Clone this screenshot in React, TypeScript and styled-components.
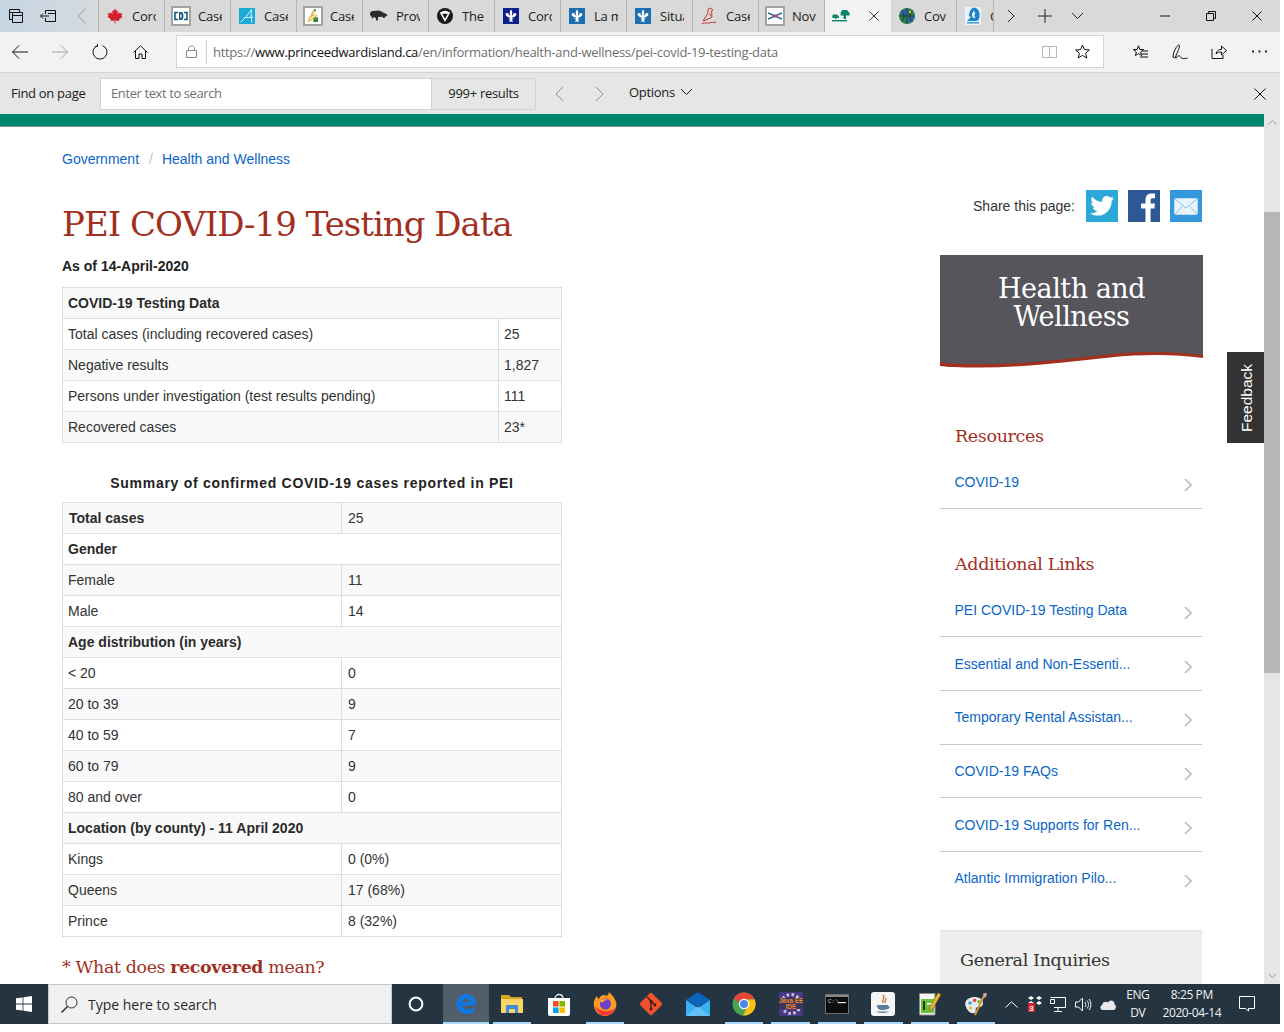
import React from "react";
import styled, { createGlobalStyle } from "styled-components";

const uiFont = `"Open Sans", "Noto Sans", sans-serif`;
const pageFont = `"Liberation Sans", Arial, sans-serif`;
const serifFont = `"DejaVu Serif", "Liberation Serif", serif`;

const GlobalStyle = createGlobalStyle`
    html, body {
        margin: 0;
        padding: 0;
        background: #fff;
    }
    * {
        box-sizing: border-box;
    }
`;

/* ---------- small drawn icons ---------- */

const Line = styled.svg.attrs({ fill: "none", stroke: "currentColor", strokeWidth: 1 })`
    display: block;
    flex: none;
`;

const ChevronLeft = ({ h = 20 }: { h?: number }) => (
    <Line width={h / 2 + 1} height={h} viewBox={`0 0 ${h / 2 + 1} ${h}`}>
        <path d={`M${h / 2} 1 L1 ${h / 2} L${h / 2} ${h - 1}`} />
    </Line>
);
const ChevronRight = ({ h = 20 }: { h?: number }) => (
    <Line width={h / 2 + 1} height={h} viewBox={`0 0 ${h / 2 + 1} ${h}`}>
        <path d={`M1 1 L${h / 2} ${h / 2} L1 ${h - 1}`} />
    </Line>
);
const ChevronDown = ({ w = 14 }: { w?: number }) => (
    <Line width={w} height={w / 2 + 1} viewBox={`0 0 ${w} ${w / 2 + 1}`}>
        <path d={`M1 1 L${w / 2} ${w / 2} L${w - 1} 1`} />
    </Line>
);
const ChevronUp = () => (
    <Line width="9" height="5" viewBox="0 0 9 5">
        <path d="M0.5 4.5 L4.5 0.5 L8.5 4.5" />
    </Line>
);
const Cross = ({ s = 12 }: { s?: number }) => (
    <Line width={s} height={s} viewBox={`0 0 ${s} ${s}`}>
        <path d={`M0.5 0.5 L${s - 0.5} ${s - 0.5} M${s - 0.5} 0.5 L0.5 ${s - 0.5}`} />
    </Line>
);

const Fleur = ({ bg }: { bg: string }) => (
    <svg width="16" height="16" viewBox="0 0 16 16">
        <rect width="16" height="16" fill={bg} />
        <path
            fill="#fff"
            d="M8 1.5 C9.6 3.4 9.6 5 8.7 7.2 H10 C9.8 5.8 11 4.6 12.4 5 C14 5.6 13.6 8 12 8.2 C11.6 9 10.6 9.4 9.4 9.2 L9.2 10.4 H10.4 V11.2 H9 L9.8 14 H8.6 L8 12.4 L7.4 14 H6.2 L7 11.2 H5.6 V10.4 H6.8 L6.6 9.2 C5.4 9.4 4.4 9 4 8.2 C2.4 8 2 5.6 3.6 5 C5 4.6 6.2 5.8 6 7.2 H7.3 C6.4 5 6.4 3.4 8 1.5 Z"
        />
    </svg>
);

const favicons: Record<string, React.ReactNode> = {
    canada: (
        <svg width="16" height="16" viewBox="0 0 16 16">
            <path
                fill="#d3202b"
                d="M8 0.5 L9.4 3 L11 2.2 L10.3 6 L12.2 4.2 L12.8 5.6 L15.4 5.2 L14.4 8 L15.6 8.7 L12 11.6 L12.4 13 L8.4 12.6 V15.6 H7.6 V12.6 L3.6 13 L4 11.6 L0.4 8.7 L1.6 8 L0.6 5.2 L3.2 5.6 L3.8 4.2 L5.7 6 L5 2.2 L6.6 3 Z"
            />
        </svg>
    ),
    cbc: (
        <svg width="20" height="20" viewBox="0 0 20 20">
            <rect x="1" y="1" width="18" height="18" fill="#fff" stroke="#a3a3a3" strokeWidth="2" />
            <path fill="none" stroke="#14597f" strokeWidth="1.6" d="M7 6.5 H4 V13.5 H7 M13 6.5 H16 V13.5 H13" />
            <path fill="#14597f" d="M8 6 H10 C11.8 6 12.4 8 12.4 10 C12.4 12 11.8 14 10 14 H8 Z" />
            <path fill="#fff" d="M9.4 8 H10 C10.8 8 10.8 12 10 12 H9.4 Z" />
        </svg>
    ),
    atlantic: (
        <svg width="16" height="16" viewBox="0 0 16 16">
            <rect width="16" height="16" fill="#19aad8" />
            <path fill="none" stroke="#e8f7fc" strokeWidth="1" d="M1.5 14 C5 12 9 6 12.5 1.5 C12 6 12 11 13 14.5 M5 10 C8 9 11 9.4 14 9.4" />
        </svg>
    ),
    sask: (
        <svg width="20" height="20" viewBox="0 0 20 20">
            <rect x="1" y="1" width="18" height="18" fill="#fff" stroke="#a3a3a3" strokeWidth="2" />
            <path fill="none" stroke="#e0b63c" strokeWidth="1.5" d="M5 16 L11 4 M7 15 L14 9 M6 12 L12 8" />
            <path fill="#2f8a3d" d="M11 12 L15 11 L15 16 L10 16 Z M11 3 L13 3 L12 7 Z" />
        </svg>
    ),
    bison: (
        <svg width="18" height="12" viewBox="0 0 18 12">
            <path
                fill="#2b2b2b"
                d="M0 3 C1 1 4 0.5 6 1 C8 0 11 1 13 2.5 C15 3 17 4 17.6 5.5 L15.5 6.4 L14.5 8 H13 L12.6 6.8 L8 7 L8 10.5 L6.4 10.5 L5.4 7.4 L3.6 7 L2.8 9 L1.4 6.6 C0.4 6 0 4.5 0 3 Z"
            />
        </svg>
    ),
    ontario: (
        <svg width="16" height="16" viewBox="0 0 16 16">
            <circle cx="8" cy="8" r="8" fill="#1a1a1a" />
            <path fill="none" stroke="#fff" strokeWidth="1.5" d="M4 5 H12 L8 12.4 Z M4 5 C5.5 4 6.8 3.6 8 3.4 C9.2 3.6 10.5 4 12 5" />
        </svg>
    ),
    "qc-navy": <Fleur bg="#0e1f8a" />,
    "qc-blue": <Fleur bg="#1d6fb0" />,
    nb: (
        <svg width="18" height="18" viewBox="0 0 18 18">
            <path
                fill="none"
                stroke="#c8342c"
                strokeWidth="1"
                d="M10 1 C7.5 1.5 8 4 8 6 L3 14 M10 1 L13 3 L11.5 4 L12 10 L7 12.5 L3.5 14 M9 7 L11.5 9 M2 16.5 C5 15 8 17 11 15.5 C13 15 15 16 16 15"
            />
        </svg>
    ),
    ns: (
        <svg width="20" height="20" viewBox="0 0 20 20">
            <rect x="1" y="1" width="18" height="18" fill="#fff" stroke="#a3a3a3" strokeWidth="2" />
            <path fill="none" stroke="#2c6ca8" strokeWidth="1.6" d="M3 7 L17 13 M17 7 L3 13" />
            <path fill="#d8434a" d="M8.5 8.5 H11.5 V11.5 H8.5 Z" />
        </svg>
    ),
    pei: (
        <svg width="18" height="14" viewBox="0 0 18 14">
            <path fill="#0a8468" d="M10 1 H15 L17.6 4 V6.5 H14 V10 H11.6 V6.5 H8.6 V4 Z" />
            <path fill="#0a8468" d="M1 5.5 H5 L7 7.5 V9 H4.4 V10 H3 V9 H0.4 V7 Z" />
            <rect y="11" width="15" height="1.4" fill="#0a8468" />
        </svg>
    ),
    globe: (
        <svg width="16" height="16" viewBox="0 0 16 16">
            <circle cx="8" cy="8" r="8" fill="#2a7d4f" />
            <path fill="#2f5fb8" d="M3 3 L7 1 L9 4 L6 8 L2 7 Z M10 9 L15 8 L13 14 L9 14 Z" />
            <path fill="none" stroke="#1c2b2b" strokeWidth="0.7" d="M8 0 V16 M0 8 H16 M2.4 2.4 C6 5 6 11 2.4 13.6 M13.6 2.4 C10 5 10 11 13.6 13.6" />
            <path fill="#d9c544" d="M10 3 L12 3 L12 5 L10 5 Z" />
        </svg>
    ),
    nl: (
        <svg width="16" height="18" viewBox="0 0 16 18">
            <rect width="16" height="18" fill="#e8f2fb" />
            <path fill="#1f82c8" d="M9 0.5 C13 1 15 5 14.6 9 C14.4 12 13 14 11 14 H2 C4 12 5 11 6 10 L4 9 C4 5 5.6 1.6 9 0.5 Z" />
            <path fill="#fff" d="M8.6 4 C10 4.6 10.6 7 9 9 L11 11 L7.6 10.4 L7 7 Z" />
            <rect x="2" y="15" width="12" height="1.6" fill="#4aa0da" />
        </svg>
    ),
};

/* ---------- tab strip ---------- */

const TabStrip = styled.div`
    display: flex;
    height: 32px;
    background: #d9d9d9;
    color: #222;
`;

const TabActions = styled.div`
    display: flex;
    align-items: center;
    width: 99px;
    flex: none;
    padding-left: 9px;
    gap: 17px;
    background: linear-gradient(90deg, #c6d5e3, #d5dade);
    border-right: 1px solid #b3b3b3;
    color: #111;
`;

const TabBack = styled.span`
    color: #a0a0a0;
    margin-left: 4px;
`;

const Tab = styled.div<{ $w: number; $active?: boolean }>`
    display: flex;
    align-items: center;
    flex: none;
    position: relative;
    width: ${(p) => p.$w}px;
    height: 32px;
    background: ${(p) => (p.$active ? "#f2f2f2" : "#d9d9d9")};
    border-right: 1px solid ${(p) => (p.$active ? "#f2f2f2" : "#b3b3b3")};
`;

const TabIcon = styled.span`
    flex: none;
    width: 33px;
    height: 32px;
    display: flex;
    align-items: center;
    justify-content: center;
    padding-right: 2px;
`;

const TabLabel = styled.span<{ $w: number }>`
    display: block;
    width: ${(p) => p.$w}px;
    overflow: hidden;
    white-space: nowrap;
    font: 13px ${uiFont};
    letter-spacing: -0.2px;
    line-height: 32px;
    color: #222;
`;

const TabClose = styled.span`
    margin-left: auto;
    margin-right: 11px;
    color: #333;
`;

const StripTool = styled.span<{ $w: number }>`
    flex: none;
    width: ${(p) => p.$w}px;
    display: flex;
    align-items: center;
    justify-content: center;
    color: #222;
`;

const StripSpacer = styled.div`
    flex: 1;
`;

const WindowButton = styled.span`
    flex: none;
    width: 46px;
    display: flex;
    align-items: center;
    justify-content: center;
    color: #111;
`;

/* ---------- nav bar ---------- */

const NavBar = styled.div`
    display: flex;
    align-items: center;
    height: 41px;
    padding: 0 0 1px 0;
    background: #f2f2f2;
    border-bottom: 1px solid #d4d4d4;
`;

const NavButton = styled.span<{ $w?: number; $off?: boolean }>`
    flex: none;
    width: ${(p) => p.$w ?? 40}px;
    display: flex;
    align-items: center;
    justify-content: center;
    color: ${(p) => (p.$off ? "#a8a8a8" : "#111")};
`;

const AddressBox = styled.div`
    flex: none;
    display: flex;
    align-items: center;
    width: 928px;
    height: 33px;
    margin-left: 16px;
    margin-right: 17px;
    padding-right: 4px;
    background: #fff;
    border: 1px solid #d4d4d4;
    color: #777;
`;

const LockSlot = styled.span`
    flex: none;
    width: 30px;
    height: 24px;
    display: flex;
    align-items: center;
    justify-content: center;
    border-right: 1px solid #d0d0d0;
    color: #8a8a8a;
`;

const Url = styled.span`
    flex: 1;
    padding-left: 6px;
    font: 13px ${uiFont};
    color: #6f6f6f;
    white-space: nowrap;
    letter-spacing: -0.29px;
    b {
        font-weight: 400;
        color: #111;
    }
`;

const AddressTool = styled.span<{ $muted?: boolean }>`
    flex: none;
    width: 33px;
    display: flex;
    justify-content: center;
    color: ${(p) => (p.$muted ? "#b5b5b5" : "#111")};
`;

/* ---------- find bar ---------- */

const FindBar = styled.div`
    display: flex;
    align-items: center;
    height: 41px;
    background: #e6e6e6;
    font: 13px ${uiFont};
    letter-spacing: -0.3px;
    color: #1c1c1c;
`;

const FindLabel = styled.span`
    flex: none;
    width: 100px;
    padding-left: 11px;
    margin-bottom: 2px;
`;

const FindInput = styled.div`
    flex: none;
    width: 332px;
    height: 32px;
    padding-left: 10px;
    line-height: 29px;
    letter-spacing: -0.4px;
    background: #fff;
    border: 1px solid #d2d2d2;
    color: #707070;
`;

const FindCount = styled.div`
    flex: none;
    width: 104px;
    height: 32px;
    line-height: 28px;
    text-align: center;
    border: 1px solid #d2d2d2;
    border-left: none;
    background: #e6e6e6;
    margin-right: 3px;
`;

const FindArrow = styled.span`
    flex: none;
    width: 40px;
    display: flex;
    justify-content: center;
    color: #8f8f8f;
`;

const FindOptions = styled.span`
    display: flex;
    align-items: center;
    gap: 5px;
    margin-left: 10px;
    margin-bottom: 3px;
`;

const FindClose = styled.span`
    margin-left: auto;
    margin-right: 14px;
    color: #111;
`;

/* ---------- page ---------- */

const Viewport = styled.div`
    display: flex;
    height: 870px;
    overflow: hidden;
`;

const PageBody = styled.div`
    position: relative;
    flex: none;
    width: 1264px;
    overflow: hidden;
    background: #fff;
    font: 14px/20px ${pageFont};
    color: #333;
`;

const Band = styled.div`
    height: 13px;
    background: #00856f;
    border-bottom: 1px solid #7d8f8a;
`;

const Columns = styled.div`
    display: flex;
    padding-left: 62px;
`;

const MainColumn = styled.main`
    flex: none;
    width: 500px;
    padding-top: 22px;
`;

const Breadcrumb = styled.nav`
    display: flex;
    height: 20px;
    a {
        color: #0b66c3;
        text-decoration: none;
    }
    span {
        color: #c4c4c4;
        padding: 0 9px 0 10px;
    }
`;

const Title = styled.h1`
    margin: 32px 0 0;
    font: 400 34px/46px ${serifFont};
    letter-spacing: -1px;
    color: #a1301f;
    white-space: nowrap;
`;

const AsOf = styled.p`
    margin: 9px 0 11px;
    font-weight: 700;
    color: #222;
`;

const DataTable = styled.table<{ $valueInset?: number }>`
    width: 500px;
    table-layout: fixed;
    border-collapse: collapse;
    caption {
        caption-side: top;
        height: 29px;
        padding-top: 0;
        font-weight: 700;
        letter-spacing: 0.71px;
        color: #222;
    }
    td + td {
        padding-left: ${(p) => p.$valueInset ?? 5}px;
    }
`;

const Row = styled.tr`
    height: 31px;
    &:nth-child(odd) {
        background: #f9f9f9;
    }
`;

const Cell = styled.td<{ $bold?: boolean; $inset?: boolean }>`
    padding: 0 5px 0 ${(p) => (p.$inset ? 6 : 5)}px;
    border: 1px solid #ddd;
    font-weight: ${(p) => (p.$bold ? 700 : 400)};
    color: ${(p) => (p.$bold ? "#2b2b2b" : "#333")};
    white-space: nowrap;
`;

const Spacer = styled.div`
    height: 30px;
`;

const FootNote = styled.p`
    margin: 18px 0 0;
    font: 400 17.4px/24px ${serifFont};
    letter-spacing: -0.35px;
    color: #a1301f;
    white-space: nowrap;
    b {
        font-weight: 700;
    }
`;

const SideColumn = styled.aside`
    flex: none;
    width: 263px;
    margin-left: 378px;
    padding-top: 63px;
`;

const ShareRow = styled.div`
    display: flex;
    align-items: center;
    justify-content: flex-end;
    height: 32px;
    padding-right: 1px;
`;

const ShareLabel = styled.span`
    margin-right: 1px;
    color: #333;
`;

const ShareIcon = styled.span<{ $bg: string }>`
    display: flex;
    align-items: center;
    justify-content: center;
    width: 32px;
    height: 32px;
    margin-left: 10px;
    background: ${(p) => p.$bg};
    overflow: hidden;
`;

const Banner = styled.div`
    margin-top: 33px;
    height: 96px;
    padding-top: 20px;
    background: #56555b;
    color: #fff;
    text-align: center;
    font: 400 27px/28px ${serifFont};
    letter-spacing: -0.5px;
`;

const BannerWave = styled.svg`
    display: block;
    width: 263px;
    height: 17px;
`;

const SideHeading = styled.h2<{ $top: number; $after: number }>`
    margin: ${(p) => p.$top}px 0 ${(p) => p.$after}px 15px;
    height: 24px;
    font: 400 17.5px/24px ${serifFont};
    letter-spacing: -0.35px;
    color: #a1301f;
`;

const LinkRow = styled.a<{ $last?: boolean; $nudge?: boolean }>`
    display: flex;
    align-items: center;
    justify-content: space-between;
    width: 262px;
    height: 53.7px;
    padding: ${(p) => (p.$nudge ? 2 : 0)}px 10px 0 14.5px;
    color: #0b66c3;
    text-decoration: none;
    white-space: nowrap;
    border-bottom: 1px solid ${(p) => (p.$last ? "transparent" : "#c6c6c6")};
`;

const LinkChevron = styled.svg.attrs({ width: 8, height: 14, viewBox: "0 0 8 14" })`
    display: block;
    margin-top: 6px;
    fill: none;
    stroke: #bcbcbc;
    stroke-width: 1.6;
`;

const InquiryBox = styled.div`
    width: 262px;
    height: 100px;
    margin-top: 24px;
    padding: 14px 19px;
    background: #efefef;
    border: 1px solid #ececec;
    border-top: 2px solid #e8e8e8;
    font: 400 17.5px/28px ${serifFont};
    letter-spacing: -0.35px;
    color: #333;
`;

const Feedback = styled.div`
    position: absolute;
    top: 238px;
    right: 0;
    width: 37px;
    height: 91px;
    padding-right: 3px;
    display: flex;
    align-items: center;
    justify-content: center;
    background: #333;
    color: #fff;
    font: 15.5px ${pageFont};
    writing-mode: vertical-rl;
    transform: rotate(180deg);
`;

const ScrollBar = styled.div`
    flex: none;
    width: 16px;
    display: flex;
    flex-direction: column;
    background: #e6e6e6;
`;

const ScrollArrow = styled.span<{ $end?: boolean }>`
    flex: none;
    height: 16px;
    display: flex;
    align-items: center;
    justify-content: center;
    color: #9a9a9a;
    margin-top: ${(p) => (p.$end ? "auto" : "0")};
`;

const ScrollThumb = styled.div`
    flex: none;
    height: 461px;
    margin-top: 82px;
    background: #b6b6b6;
`;

/* ---------- task bar ---------- */

const TaskBar = styled.div`
    display: flex;
    align-items: stretch;
    height: 40px;
    background: #243441;
    color: #fff;
`;

const StartButton = styled.div`
    flex: none;
    width: 48px;
    display: flex;
    align-items: center;
    justify-content: center;
`;

const SearchBox = styled.div`
    flex: none;
    display: flex;
    align-items: center;
    gap: 10px;
    width: 344px;
    padding-left: 12px;
    background: #f1f1f1;
    border: 1px solid #c9c9c9;
    color: #2a2a2a;
    font: 14px ${uiFont};
`;

const CortanaSlot = styled.div`
    flex: none;
    width: 51px;
    padding-right: 4px;
    display: flex;
    align-items: center;
    justify-content: center;
`;

const AppSlot = styled.div<{ $open?: boolean; $active?: boolean }>`
    flex: none;
    position: relative;
    width: ${(p) => (p.$active ? 46 : 46.4)}px;
    display: flex;
    align-items: center;
    justify-content: center;
    background: ${(p) => (p.$active ? "#4f5e68" : "transparent")};
    &::after {
        content: "";
        display: ${(p) => (p.$open ? "block" : "none")};
        position: absolute;
        bottom: 0;
        left: ${(p) => (p.$active ? "0" : "4px")};
        right: ${(p) => (p.$active ? "0" : "4px")};
        height: 2px;
        background: #a6d8fb;
    }
`;

const Tray = styled.div`
    flex: 1;
    display: flex;
    align-items: center;
`;

const TrayIcon = styled.span<{ $w: number }>`
    flex: none;
    width: ${(p) => p.$w}px;
    display: flex;
    justify-content: center;
    color: #fff;
`;

const TrayText = styled.div<{ $w: number }>`
    flex: none;
    width: ${(p) => p.$w}px;
    text-align: center;
    font: 12px/18px ${uiFont};
    letter-spacing: -0.4px;
    color: #f2f2f2;
`;

const Frame = styled.div`
    width: 1280px;
    height: 1024px;
    overflow: hidden;
`;

/* ---------- data ---------- */

const tabs: { icon: string; label: string }[] = [
    { icon: "canada", label: "Coronavirus" },
    { icon: "cbc", label: "Cases" },
    { icon: "atlantic", label: "Cases" },
    { icon: "sask", label: "Cases" },
    { icon: "bison", label: "Province" },
    { icon: "ontario", label: "The" },
    { icon: "qc-navy", label: "Corona" },
    { icon: "qc-blue", label: "La maladie" },
    { icon: "qc-blue", label: "Situation" },
    { icon: "nb", label: "Cases" },
    { icon: "ns", label: "Novel" },
];

const additionalLinks = [
    "PEI COVID-19 Testing Data",
    "Essential and Non-Essenti...",
    "Temporary Rental Assistan...",
    "COVID-19 FAQs",
    "COVID-19 Supports for Ren...",
    "Atlantic Immigration Pilo...",
];

const summaryRows: { a: string; b?: string; bold?: boolean }[] = [
    { a: "Total cases", b: "25", bold: true },
    { a: "Gender" },
    { a: "Female", b: "11" },
    { a: "Male", b: "14" },
    { a: "Age distribution (in years)" },
    { a: "< 20", b: "0" },
    { a: "20 to 39", b: "9" },
    { a: "40 to 59", b: "7" },
    { a: "60 to 79", b: "9" },
    { a: "80 and over", b: "0" },
    { a: "Location (by county) - 11 April 2020" },
    { a: "Kings", b: "0 (0%)" },
    { a: "Queens", b: "17 (68%)" },
    { a: "Prince", b: "8 (32%)" },
];

const taskApps: { key: string; open?: boolean; node: React.ReactNode }[] = [
    {
        key: "explorer",
        open: true,
        node: (
            <svg width="22" height="20" viewBox="0 0 22 20">
                <path fill="#d9a21f" d="M0 1 H8 L10 3 H21 V18 H0 Z" />
                <rect y="5" width="22" height="14" fill="#fbd666" />
                <path fill="#3c8ed6" d="M5 19 V11 H17 V19 H14 V15 H8 V19 Z" />
            </svg>
        ),
    },
    {
        key: "store",
        node: (
            <svg width="24" height="24" viewBox="0 0 24 24">
                <path fill="none" stroke="#e8e8e8" strokeWidth="1.4" d="M8 7 C8 1 16 1 16 7" />
                <path fill="#fff" d="M1 6 H23 V22 C23 23 22 24 21 24 H3 C2 24 1 23 1 22 Z" />
                <rect x="6" y="9" width="5.6" height="5.6" fill="#f25022" />
                <rect x="12.4" y="9" width="5.6" height="5.6" fill="#7fba00" />
                <rect x="6" y="15.4" width="5.6" height="5.6" fill="#00a4ef" />
                <rect x="12.4" y="15.4" width="5.6" height="5.6" fill="#ffb900" />
            </svg>
        ),
    },
    {
        key: "firefox",
        open: true,
        node: (
            <svg width="24" height="24" viewBox="0 0 24 24">
                <path fill="#ff9a1f" d="M16 0 C19 3 23 7 23.4 12 C23.6 19 18 24 12 24 C6 24 0.6 19 0.8 12 C0.9 8.6 2 6 4 4 C4.4 6 5 6.6 6 7 C7 4 9.5 2.6 12 3 C13 5 15.8 3.4 16 0 Z" />
                <path fill="#f2373e" d="M2 14 C3 20 8 23.6 12 23.6 C17 23.6 21.6 20 22.6 15 C20 19 15 20 11 19 C7 18 4 17 2 14 Z" />
                <circle cx="12.4" cy="12" r="5.6" fill="#6c3fc9" />
                <path fill="#ffb23a" d="M7 9 C9 7.4 13 6.6 15 8 C12 8 10 9 9 11 Z" />
            </svg>
        ),
    },
    {
        key: "git",
        node: (
            <svg width="24" height="24" viewBox="0 0 24 24">
                <rect x="3.6" y="3.6" width="16.8" height="16.8" rx="2" fill="#f0512e" transform="rotate(45 12 12)" />
                <path fill="none" stroke="#3a1a12" strokeWidth="1.3" d="M8 5 L16 13 M12 9.4 V17" />
                <circle cx="12" cy="9.4" r="1.4" fill="#3a1a12" />
                <circle cx="12" cy="17" r="1.4" fill="#3a1a12" />
                <circle cx="16" cy="13" r="1.4" fill="#3a1a12" />
            </svg>
        ),
    },
    {
        key: "mail",
        node: (
            <svg width="24" height="24" viewBox="0 0 24 24">
                <path fill="#0b65bd" d="M0 8 L12 0 L24 8 L12 15 Z" />
                <path fill="#37b1f4" d="M0 8 L12 16 L24 8 V24 H0 Z" />
                <path fill="#8bd4fb" d="M0 24 L12 14 L24 24 Z" opacity="0.5" />
            </svg>
        ),
    },
    {
        key: "chrome",
        open: true,
        node: (
            <svg width="24" height="24" viewBox="0 0 24 24">
                <circle cx="12" cy="12" r="11.5" fill="#4aa553" />
                <path fill="#e2463a" d="M1.7 7 A11.5 11.5 0 0 1 22.6 7.4 L12 7.4 A5 5 0 0 0 7.4 10.4 Z" />
                <path fill="#fbc116" d="M22.6 7.4 A11.5 11.5 0 0 1 11 23.5 L16 14 A5 5 0 0 0 12 7.4 Z" />
                <circle cx="12" cy="12" r="5.2" fill="#fff" />
                <circle cx="12" cy="12" r="4" fill="#4a86e8" />
            </svg>
        ),
    },
    {
        key: "eclipse",
        open: true,
        node: (
            <svg width="24" height="24" viewBox="0 0 24 24">
                <rect width="24" height="24" fill="#473885" />
                <circle cx="12" cy="12" r="9.5" fill="none" stroke="#c9c5d8" strokeWidth="3" strokeDasharray="2.6 2.4" />
                <rect y="6" width="24" height="11" fill="#3d3360" />
                <text x="12" y="11" textAnchor="middle" fontSize="6.4" fontFamily="Liberation Sans" fontWeight="700" fill="#f08a24">Java EE</text>
                <text x="12" y="17" textAnchor="middle" fontSize="6.4" fontFamily="Liberation Sans" fontWeight="700" fill="#f08a24">IDE</text>
            </svg>
        ),
    },
    {
        key: "cmd",
        open: true,
        node: (
            <svg width="24" height="20" viewBox="0 0 24 20">
                <rect x="0.5" y="0.5" width="23" height="19" fill="#0c0c0c" stroke="#6d6d6d" />
                <rect x="1" y="1" width="22" height="2" fill="#8a8a8a" />
                <text x="3" y="9" fontSize="6" fontFamily="Liberation Mono" fill="#d8d8d8">C:\</text>
                <rect x="13" y="8" width="8" height="1.2" fill="#e8e8e8" />
            </svg>
        ),
    },
    {
        key: "java",
        open: true,
        node: (
            <svg width="24" height="24" viewBox="0 0 24 24">
                <rect width="24" height="24" rx="3" fill="#f4f6f6" />
                <path fill="none" stroke="#d9772b" strokeWidth="1.4" d="M12 3 C15 6 10 8 12 11 M14.5 6 C16 8 13 9.4 14 11" />
                <path fill="#5a7d99" d="M6 13 H17 C17 17 15 18 11.5 18 C8 18 6 17 6 13 Z M17 14 C20 14 19 17 15 17.5 Z M5 19.5 H18 C17 21.4 6 21.4 5 19.5 Z" />
            </svg>
        ),
    },
    {
        key: "notepad",
        open: true,
        node: (
            <svg width="24" height="24" viewBox="0 0 24 24">
                <path fill="#f4f6ef" stroke="#8d8d8d" d="M1.5 1.5 H17 V23 H1.5 Z" />
                <rect x="3" y="7" width="13" height="14" fill="#6cbf3b" />
                <rect x="5" y="9" width="2" height="9" fill="#1d3a10" />
                <rect x="9" y="11" width="5" height="1.6" fill="#fff" />
                <path fill="#e9b533" stroke="#8a5f12" strokeWidth="0.6" d="M20 0.8 L23 2.6 L14.6 17 L11.8 18.4 L11.8 15 Z" />
            </svg>
        ),
    },
    {
        key: "paint",
        open: true,
        node: (
            <svg width="24" height="24" viewBox="0 0 24 24">
                <path fill="#e6edf2" d="M2 15 C-1 9 5 5 11 5 C17 5 21 10 18 14 C16 16 13 14 12 16 C11 18 13 20 10 21 C7 22 3.6 19 2 15 Z" />
                <circle cx="6" cy="11" r="1.8" fill="#3e9ad9" />
                <circle cx="10.6" cy="8.4" r="1.8" fill="#e84a4a" />
                <circle cx="15" cy="9.8" r="1.8" fill="#6cbf3b" />
                <circle cx="6.6" cy="16" r="1.8" fill="#ecc13a" />
                <path fill="none" stroke="#d9903a" strokeWidth="2" d="M11 23 L20 3.6" />
                <path fill="#c9b8a0" d="M19 1.6 L23 1 L22 5 L20 5.6 Z" />
            </svg>
        ),
    },
];

/* ---------- page ---------- */

export default function App() {
    return (
        <Frame>
            <GlobalStyle />
            <TabStrip>
                <TabActions>
                    <Line width="14" height="14" viewBox="0 0 14 14">
                        <path d="M0.5 0.5 H10.5 V3.5 M3.5 3.5 H13.5 V13.5 H3.5 Z M3.5 6.5 H13.5 M0.5 0.5 V10.5 H3.5 M0.5 3.5 H3.5" />
                    </Line>
                    <Line width="16" height="12" viewBox="0 0 16 12">
                        <path d="M5.5 0.5 H15.5 V11.5 H5.5 V8 M5.5 4 V0.5 M8 3.5 H15.5 M0.5 6 H9 M0.5 6 L3 3.5 M0.5 6 L3 8.5" />
                    </Line>
                    <TabBack>
                        <ChevronLeft h={16} />
                    </TabBack>
                </TabActions>
                {tabs.map((t, i) => (
                    <Tab key={i} $w={66}>
                        <TabIcon>{favicons[t.icon]}</TabIcon>
                        <TabLabel $w={24}>{t.label}</TabLabel>
                    </Tab>
                ))}
                <Tab $w={66} $active>
                    <TabIcon>{favicons.pei}</TabIcon>
                    <TabClose>
                        <Cross s={10} />
                    </TabClose>
                </Tab>
                <Tab $w={66}>
                    <TabIcon>{favicons.globe}</TabIcon>
                    <TabLabel $w={22}>Covid</TabLabel>
                </Tab>
                <Tab $w={37}>
                    <TabIcon>{favicons.nl}</TabIcon>
                    <TabLabel $w={3}>COVID</TabLabel>
                </Tab>
                <StripTool $w={34}>
                    <ChevronRight h={14} />
                </StripTool>
                <StripTool $w={33}>
                    <Line width="14" height="14" viewBox="0 0 14 14">
                        <path d="M7 0 V14 M0 7 H14" />
                    </Line>
                </StripTool>
                <StripTool $w={33}>
                    <ChevronDown w={13} />
                </StripTool>
                <StripSpacer />
                <WindowButton>
                    <Line width="10" height="2" viewBox="0 0 10 2">
                        <path d="M0 1 H10" />
                    </Line>
                </WindowButton>
                <WindowButton>
                    <Line width="10" height="10" viewBox="0 0 10 10">
                        <path d="M0.5 2.5 H7.5 V9.5 H0.5 Z M2.5 2.5 V0.5 H9.5 V7.5 H7.5" />
                    </Line>
                </WindowButton>
                <WindowButton>
                    <Cross s={10} />
                </WindowButton>
            </TabStrip>

            <NavBar>
                <NavButton>
                    <Line width="16" height="14" viewBox="0 0 16 14">
                        <path d="M0.5 7 H16 M7 0.5 L0.5 7 L7 13.5" />
                    </Line>
                </NavButton>
                <NavButton $off>
                    <Line width="16" height="14" viewBox="0 0 16 14">
                        <path d="M0 7 H15.5 M9 0.5 L15.5 7 L9 13.5" />
                    </Line>
                </NavButton>
                <NavButton>
                    <Line width="16" height="16" viewBox="0 0 16 16">
                        <path d="M5.4 1.6 A7 7 0 1 0 10.6 1.6 M5.5 0 V2.5 H3" />
                    </Line>
                </NavButton>
                <NavButton>
                    <Line width="15" height="14" viewBox="0 0 15 14">
                        <path d="M0.5 7.5 L7.5 0.8 L14.5 7.5 M2.5 6 V13.5 H6 V9 H9 V13.5 H12.5 V6" />
                    </Line>
                </NavButton>
                <AddressBox>
                    <LockSlot>
                        <Line width="11" height="13" viewBox="0 0 11 13">
                            <path d="M0.5 5.5 H10.5 V12.5 H0.5 Z M2.5 5.5 V3.5 C2.5 0 8.5 0 8.5 3.5 V5.5" />
                        </Line>
                    </LockSlot>
                    <Url>
                        https://<b>www.princeedwardisland.ca</b>/en/information/health-and-wellness/pei-covid-19-testing-data
                    </Url>
                    <AddressTool $muted>
                        <Line width="15" height="14" viewBox="0 0 15 14">
                            <path d="M0.5 1.5 H7.5 V12.5 H0.5 Z M7.5 1.5 H14.5 V12.5 H7.5 M3 0.5 V1.5" />
                        </Line>
                    </AddressTool>
                    <AddressTool>
                        <Line width="15" height="15" viewBox="0 0 15 15">
                            <path d="M7.5 1 L9.4 5.6 L14.4 6 L10.6 9.2 L11.8 14 L7.5 11.4 L3.2 14 L4.4 9.2 L0.6 6 L5.6 5.6 Z" />
                        </Line>
                    </AddressTool>
                </AddressBox>
                <NavButton $w={39}>
                    <Line width="15" height="14" viewBox="0 0 15 14">
                        <path d="M5.5 0.8 L6.8 4.4 L10.6 4.6 L7.6 7 L8.6 10.6 L5.5 8.6 L2.4 10.6 L3.4 7 L0.4 4.6 L4.2 4.4 Z M9 6 H15 M9 9 H15 M7 12 H15" />
                    </Line>
                </NavButton>
                <NavButton $w={39}>
                    <Line width="16" height="16" viewBox="0 0 16 16">
                        <path d="M1 13 C1 8 5 1 7 1 C9 1 5 9 3 14 L1 13 M4 14.5 C6 10 8 12 9 13.5 C10 15 13 15 15.5 14" />
                    </Line>
                </NavButton>
                <NavButton $w={39}>
                    <Line width="16" height="14" viewBox="0 0 16 14">
                        <path d="M1 4 V13.5 H12 V10 M5 9 C5.6 5.6 8 4.4 10.5 4.4 V1 L15.5 5.6 L10.5 10 V7 C8.4 7 6.4 7.4 5 9 Z" />
                    </Line>
                </NavButton>
                <NavButton $w={43}>
                    <svg width="15" height="3" viewBox="0 0 15 3">
                        <rect x="0" y="0.5" width="2" height="2" fill="#222" />
                        <rect x="6.5" y="0.5" width="2" height="2" fill="#222" />
                        <rect x="13" y="0.5" width="2" height="2" fill="#222" />
                    </svg>
                </NavButton>
            </NavBar>

            <FindBar>
                <FindLabel>Find on page</FindLabel>
                <FindInput>Enter text to search</FindInput>
                <FindCount>999+ results</FindCount>
                <FindArrow>
                    <ChevronLeft h={16} />
                </FindArrow>
                <FindArrow>
                    <ChevronRight h={16} />
                </FindArrow>
                <FindOptions>
                    Options
                    <ChevronDown w={13} />
                </FindOptions>
                <FindClose>
                    <Cross s={12} />
                </FindClose>
            </FindBar>

            <Viewport>
                <PageBody>
                    <Band />
                    <Columns>
                        <MainColumn>
                            <Breadcrumb>
                                <a href="#gov">Government</a>
                                <span>/</span>
                                <a href="#health">Health and Wellness</a>
                            </Breadcrumb>
                            <Title>PEI COVID-19 Testing Data</Title>
                            <AsOf>As of 14-April-2020</AsOf>
                            <DataTable>
                                <colgroup>
                                    <col style={{ width: 436 }} />
                                    <col />
                                </colgroup>
                                <tbody>
                                    <Row>
                                        <Cell colSpan={2} $bold>
                                            COVID-19 Testing Data
                                        </Cell>
                                    </Row>
                                    <Row>
                                        <Cell>Total cases (including recovered cases)</Cell>
                                        <Cell>25</Cell>
                                    </Row>
                                    <Row>
                                        <Cell>Negative results</Cell>
                                        <Cell>1,827</Cell>
                                    </Row>
                                    <Row>
                                        <Cell>Persons under investigation (test results pending)</Cell>
                                        <Cell>111</Cell>
                                    </Row>
                                    <Row>
                                        <Cell>Recovered cases</Cell>
                                        <Cell>23*</Cell>
                                    </Row>
                                </tbody>
                            </DataTable>
                            <Spacer />
                            <DataTable $valueInset={6}>
                                <caption>Summary of confirmed COVID-19 cases reported in PEI</caption>
                                <colgroup>
                                    <col style={{ width: 279 }} />
                                    <col />
                                </colgroup>
                                <tbody>
                                    {summaryRows.map((r) =>
                                        r.b ? (
                                            <Row key={r.a}>
                                                <Cell $bold={r.bold} $inset={r.bold}>
                                                    {r.a}
                                                </Cell>
                                                <Cell>{r.b}</Cell>
                                            </Row>
                                        ) : (
                                            <Row key={r.a}>
                                                <Cell colSpan={2} $bold>
                                                    {r.a}
                                                </Cell>
                                            </Row>
                                        )
                                    )}
                                </tbody>
                            </DataTable>
                            <FootNote>
                                * What does <b>recovered</b> mean?
                            </FootNote>
                        </MainColumn>

                        <SideColumn>
                            <ShareRow>
                                <ShareLabel>Share this page:</ShareLabel>
                                <ShareIcon $bg="#2aa9d8">
                                    <svg width="24" height="20" viewBox="0 0 24 20">
                                        <path
                                            fill="#fff"
                                            d="M24 2.4 C23.1 2.8 22.2 3 21.2 3.2 C22.2 2.6 23 1.6 23.4 0.4 C22.4 1 21.4 1.4 20.2 1.6 C18.4 -0.4 15.2 -0.4 13.4 1.6 C12.2 2.8 11.8 4.4 12.2 6 C8.2 5.8 4.6 3.8 2 0.8 C0.7 3 1.4 5.8 3.4 7.2 C2.6 7.2 1.9 7 1.2 6.6 C1.2 8.9 2.8 11 5 11.5 C4.3 11.7 3.6 11.7 2.8 11.6 C3.4 13.6 5.2 15 7.4 15 C5.2 16.8 2.6 17.6 0 17.3 C2.2 18.8 4.8 19.6 7.6 19.6 C16.6 19.6 21.8 12 21.6 5 C22.6 4.4 23.4 3.5 24 2.4 Z"
                                        />
                                    </svg>
                                </ShareIcon>
                                <ShareIcon $bg="#2d5795">
                                    <svg width="32" height="32" viewBox="0 0 32 32">
                                        <path fill="#fff" d="M17.5 32 V18.4 H13 V13.4 H17.5 V9.6 C17.5 5.4 20 3.4 23.6 3.4 H27 V8.2 H24.6 C22.8 8.2 22.6 9 22.6 10.2 V13.4 H27 L26.4 18.4 H22.6 V32 Z" />
                                    </svg>
                                </ShareIcon>
                                <ShareIcon $bg="#3498db">
                                    <svg width="24" height="17" viewBox="0 0 24 17">
                                        <rect x="0.5" y="0.5" width="23" height="16" rx="1.5" fill="#e8f3fb" stroke="#bcdcf2" />
                                        <path fill="none" stroke="#8cc4ea" strokeWidth="1" d="M1 1 L12 10 L23 1 M1 16 L9 7.6 M23 16 L15 7.6" />
                                    </svg>
                                </ShareIcon>
                            </ShareRow>
                            <Banner>
                                Health and
                                <br />
                                Wellness
                            </Banner>
                            <BannerWave viewBox="0 0 263 17">
                                <path fill="#a1301f" d="M0 0 H263 V7 C235 3.5 205 3 170 6.5 C125 11 80 17 35 16.5 C20 16.5 8 16 0 15 Z" />
                                <path fill="#56555b" d="M0 0 H263 V4 C235 0.5 205 0 170 3 C125 8 80 14 35 13 C20 13 8 12.5 0 11 Z" />
                            </BannerWave>
                            <SideHeading $top={56} $after={7}>Resources</SideHeading>
                            <LinkRow $nudge href="#c19">
                                COVID-19
                                <LinkChevron>
                                    <path d="M1 1 L7 7 L1 13" />
                                </LinkChevron>
                            </LinkRow>
                            <SideHeading $top={43} $after={8}>Additional Links</SideHeading>
                            {additionalLinks.map((label, i) => (
                                <LinkRow key={label} $last={i === additionalLinks.length - 1} href="#link">
                                    {label}
                                    <LinkChevron>
                                        <path d="M1 1 L7 7 L1 13" />
                                    </LinkChevron>
                                </LinkRow>
                            ))}
                            <InquiryBox>General Inquiries</InquiryBox>
                        </SideColumn>
                    </Columns>
                    <Feedback>Feedback</Feedback>
                </PageBody>
                <ScrollBar>
                    <ScrollArrow>
                        <ChevronUp />
                    </ScrollArrow>
                    <ScrollThumb />
                    <ScrollArrow $end>
                        <ChevronDown w={9} />
                    </ScrollArrow>
                </ScrollBar>
            </Viewport>

            <TaskBar>
                <StartButton>
                    <svg width="16" height="16" viewBox="0 0 16 16">
                        <path fill="#fff" d="M0 2.3 L6.6 1.4 V7.5 H0 Z M7.4 1.3 L16 0 V7.5 H7.4 Z M0 8.4 H6.6 V14.6 L0 13.7 Z M7.4 8.4 H16 V16 L7.4 14.8 Z" />
                    </svg>
                </StartButton>
                <SearchBox>
                    <Line width="17" height="17" viewBox="0 0 17 17">
                        <circle cx="10.5" cy="6.5" r="5.5" />
                        <path d="M6.5 10.5 L0.5 16.5" strokeWidth="1.4" />
                    </Line>
                    Type here to search
                </SearchBox>
                <CortanaSlot>
                    <svg width="16" height="16" viewBox="0 0 16 16">
                        <circle cx="8" cy="8" r="6.4" fill="none" stroke="#fff" strokeWidth="2" />
                    </svg>
                </CortanaSlot>
                <AppSlot $active $open>
                    <svg width="20" height="20" viewBox="0 0 20 20">
                        <path
                            fill="#0f78e6"
                            d="M0.4 9 C1 3.4 5.4 0 10.4 0 C16.4 0 20 4.6 19.8 11.4 H6 C6.4 15.6 12 16.6 17.6 13.6 V18.2 C11.4 21.2 2.8 20 0.9 13 C0.5 11.6 0.3 10.4 0.4 9 Z M6.2 8 H14 C14 3.6 7 3.6 6.2 8 Z"
                        />
                    </svg>
                </AppSlot>
                {taskApps.map((a) => (
                    <AppSlot key={a.key} $open={a.open}>
                        {a.node}
                    </AppSlot>
                ))}
                <Tray>
                    <TrayIcon $w={25}>
                        <Line width="13" height="7" viewBox="0 0 13 7" strokeWidth={1.2}>
                            <path d="M0.5 6.5 L6.5 0.8 L12.5 6.5" />
                        </Line>
                    </TrayIcon>
                    <TrayIcon $w={23}>
                        <svg width="16" height="16" viewBox="0 0 16 16">
                            <path fill="#fff" d="M3 0 L6 2 L3 4 L0 2 Z M11 0 L14 2 L11 4 L8 2 Z M3 5 L6 7 L3 9 L0 7 Z M11 5 L14 7 L11 9 L8 7 Z" />
                            <rect x="0" y="7" width="7" height="9" fill="#d91c2a" />
                            <text x="3.5" y="14.5" textAnchor="middle" fontSize="8" fontFamily="Liberation Sans" fontWeight="700" fill="#fff">3</text>
                        </svg>
                    </TrayIcon>
                    <TrayIcon $w={21}>
                        <Line width="16" height="16" viewBox="0 0 16 16">
                            <path d="M0.5 1.5 H15.5 V11.5 H4 M4.5 3.5 H0.5 V7.5 H4.5 Z M8 11.5 V15.5 M4 15.5 H12" />
                        </Line>
                    </TrayIcon>
                    <TrayIcon $w={31}>
                        <Line width="17" height="15" viewBox="0 0 17 15">
                            <path d="M0.5 5 H3.5 L7.5 1 V14 L3.5 10 H0.5 Z M10 5 C11 6.5 11 8.5 10 10 M12 3.5 C14 6 14 9 12 11.5 M14 2 C16.5 5 16.5 10 14 13" />
                        </Line>
                    </TrayIcon>
                    <TrayIcon $w={18}>
                        <svg width="16" height="11" viewBox="0 0 16 11">
                            <path fill="#e8e8e8" d="M3 11 C0 11 -0.6 7 2 6.2 C2.4 3 6 2 8 3.6 C9.4 0 15 1 14.6 5.4 C16.6 6.4 16.4 11 13.4 11 Z" />
                        </svg>
                    </TrayIcon>
                    <TrayText $w={41}>
                        ENG
                        <br />
                        DV
                    </TrayText>
                    <TrayText $w={67}>
                        8:25 PM
                        <br />
                        2020-04-14
                    </TrayText>
                    <TrayIcon $w={43}>
                        <Line width="16" height="16" viewBox="0 0 16 16">
                            <path d="M0.5 0.5 H15.5 V12.5 H9.5 V15 L6.5 12.5 H0.5 Z" />
                        </Line>
                    </TrayIcon>
                </Tray>
            </TaskBar>
        </Frame>
    );
}
